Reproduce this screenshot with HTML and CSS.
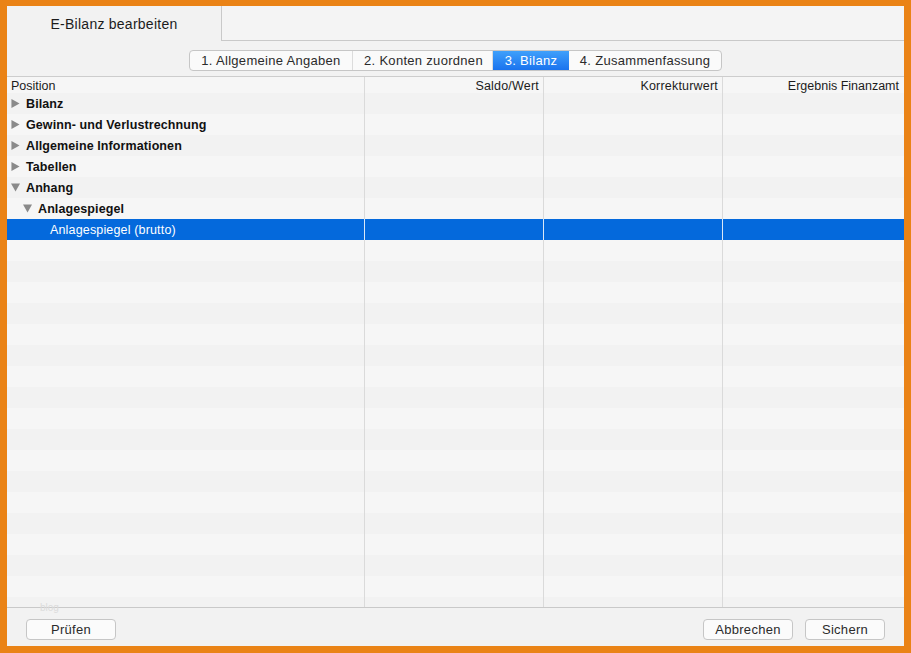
FILE: index.html
```html
<!DOCTYPE html>
<html lang="de">
<head>
<meta charset="utf-8">
<title>E-Bilanz bearbeiten</title>
<link rel="stylesheet" href="styles.css">
</head>
<body>
<div class="window">
  <div class="tabbar">
    <div class="tab">E-Bilanz bearbeiten</div>
    <div class="tab-rest"></div>
  </div>
  <div class="steps-row">
    <div class="steps">
      <div class="step s1">1. Allgemeine Angaben</div>
      <div class="step s2">2. Konten zuordnen</div>
      <div class="step s3 active">3. Bilanz</div>
      <div class="step s4">4. Zusammenfassung</div>
    </div>
  </div>
  <div class="table">
    <div class="row head">
      <div class="cell first">Position</div>
      <div class="cell num wide">Saldo/Wert</div>
      <div class="cell num wide">Korrekturwert</div>
      <div class="cell num last">Ergebnis Finanzamt</div>
    </div>
    <div class="rows">
      <div class="row"><div class="cell first l0 bold"><svg class="tri" viewBox="0 0 9 10"><path d="M0 0L9 5L0 10Z"/></svg>Bilanz</div><div class="cell"></div><div class="cell"></div><div class="cell last"></div></div>
      <div class="row"><div class="cell first l0 bold"><svg class="tri" viewBox="0 0 9 10"><path d="M0 0L9 5L0 10Z"/></svg>Gewinn- und Verlustrechnung</div><div class="cell"></div><div class="cell"></div><div class="cell last"></div></div>
      <div class="row"><div class="cell first l0 bold"><svg class="tri" viewBox="0 0 9 10"><path d="M0 0L9 5L0 10Z"/></svg>Allgemeine Informationen</div><div class="cell"></div><div class="cell"></div><div class="cell last"></div></div>
      <div class="row"><div class="cell first l0 bold"><svg class="tri" viewBox="0 0 9 10"><path d="M0 0L9 5L0 10Z"/></svg>Tabellen</div><div class="cell"></div><div class="cell"></div><div class="cell last"></div></div>
      <div class="row"><div class="cell first l0 bold"><svg class="tri" viewBox="0 0 10 9"><path d="M0 0L10 0L5 9Z"/></svg>Anhang</div><div class="cell"></div><div class="cell"></div><div class="cell last"></div></div>
      <div class="row"><div class="cell first l1 bold"><svg class="tri" viewBox="0 0 10 9"><path d="M0 0L10 0L5 9Z"/></svg>Anlagespiegel</div><div class="cell"></div><div class="cell"></div><div class="cell last"></div></div>
      <div class="row selected"><div class="cell first l2">Anlagespiegel (brutto)</div><div class="cell"></div><div class="cell"></div><div class="cell last"></div></div>
      <div class="row filler"></div>
    </div>
  </div>
  <div class="footer">
    <span class="ghost">blog</span>
    <button class="btn pruefen">Prüfen</button>
    <div class="footer-right">
      <button class="btn abbrechen">Abbrechen</button>
      <button class="btn sichern">Sichern</button>
    </div>
  </div>
</div>
</body>
</html>
```
FILE: styles.css
```css
* { box-sizing: border-box; }
html, body { margin: 0; padding: 0; height: 100%; }
body {
  background: #ea8316;
  padding: 6px 0 0 7px;
  font-family: "Liberation Sans", Arial, sans-serif;
  font-size: 12.5px;
  color: #1c1c1c;
}
.window {
  height: 640px;
  width: 897px;
  background: #f2f2f2;
  display: flex;
  flex-direction: column;
}
.tabbar { display: flex; height: 35px; flex: none; }
.tab {
  width: 215px;
  border-right: 1px solid #c9c9c9;
  text-align: center;
  padding: 10px 0 0 0;
  font-size: 14px;
  letter-spacing: 0.25px;
}
.tab-rest {
  flex: 1;
  border-bottom: 1px solid #c9c9c9;
  background: #f4f4f4;
}
.steps-row {
  height: 36px;
  flex: none;
  padding: 9px 0 0 182px;
  border-bottom: 1px solid #cdcdcd;
}
.steps {
  display: flex;
  width: 533px;
  height: 21px;
  border: 1px solid #c6c6c6;
  border-radius: 4px;
  background: #fafafa;
  overflow: hidden;
  font-size: 13px;
  letter-spacing: 0.3px;
}
.step {
  text-align: center;
  line-height: 19px;
  border-right: 1px solid #dcdcdc;
  color: #2b2b2b;
}
.s1 { width: 163px; }
.s2 { width: 140px; padding-left: 2px; }
.s3 { width: 76px; border-right: 0; }
.s4 { flex: 1; border-right: 0; }
.step.active {
  background: linear-gradient(#3fa0fb, #1a73ee);
  color: #fff;
}
.table { flex: 1; display: flex; flex-direction: column; min-height: 0; }
.row {
  display: grid;
  grid-template-columns: 358px 179px 179px 1fr;
  height: 21px;
  flex: none;
}
.row.head { height: 16px; background: #f6f6f6; }
.cell { border-right: 1px solid #dadada; min-width: 0; }
.cell.last { border-right: 0; }
.head .cell { line-height: 16px; padding: 1px 4px 0; }
.head .num { text-align: right; }
.head .wide { letter-spacing: 0.2px; }
.head .last { padding-right: 5px; }
.rows {
  flex: 1;
  min-height: 0;
  overflow: hidden;
  display: flex;
  flex-direction: column;
  background: repeating-linear-gradient(#f2f2f2 0, #f2f2f2 21px, #f6f6f6 21px, #f6f6f6 42px);
}
.rows .first { padding-top: 1px; line-height: 20px; white-space: nowrap; }
.bold { font-weight: bold; letter-spacing: 0.1px; color: #111; }
.l0 { padding-left: 4px; }
.l1 { padding-left: 16px; }
.l2 { padding-left: 43px; letter-spacing: 0.16px; }
.tri {
  width: 9px;
  height: 9px;
  fill: #8a8a8a;
  margin-right: 6px;
  vertical-align: 0;
}
.selected { background: #0469dc; color: #fff; }
.selected .cell { border-right-color: #dbe8f7; }
.selected .last { border-right: 0; }
.filler {
  flex: 1;
  height: auto;
  background: linear-gradient(to right,
    transparent 357px, #dadada 357px, #dadada 358px,
    transparent 358px, transparent 536px, #dadada 536px, #dadada 537px,
    transparent 537px, transparent 715px, #dadada 715px, #dadada 716px,
    transparent 716px);
}
.footer {
  position: relative;
  flex: none;
  height: 39px;
  border-top: 1px solid #c9c9c9;
  display: flex;
  align-items: flex-start;
  justify-content: space-between;
  padding: 11px 19px 0 19px;
}
.footer-right { display: flex; gap: 12px; }
.ghost {
  position: absolute;
  left: 33px;
  top: -6px;
  font-size: 10px;
  color: #dcdcdc;
}
.btn {
  height: 21px;
  padding: 0;
  border: 1px solid #c6c6c6;
  border-radius: 4px;
  background: #fbfbfb;
  color: #2b2b2b;
  font-family: inherit;
  font-size: 13px;
  letter-spacing: 0.3px;
  line-height: 19px;
}
.pruefen { width: 90px; }
.abbrechen { width: 90px; }
.sichern { width: 80px; }
```
